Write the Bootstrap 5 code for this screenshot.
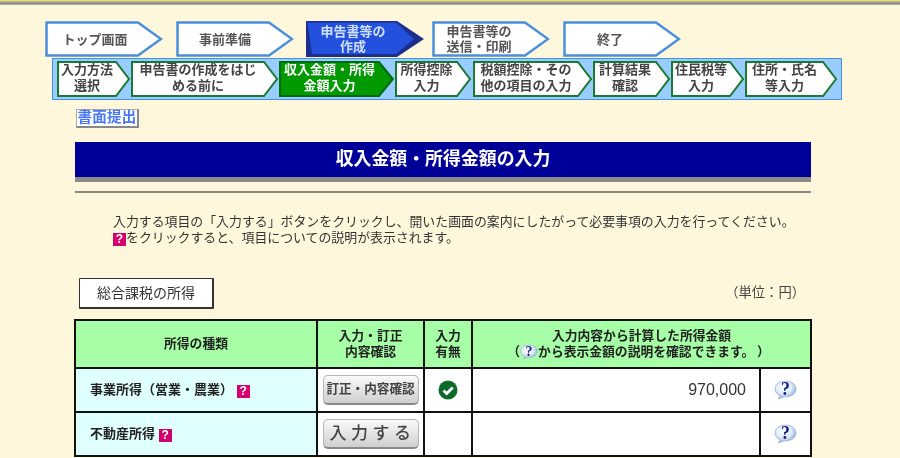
<!DOCTYPE html>
<html lang="ja">
<head>
<meta charset="utf-8">
<title>収入金額・所得金額の入力</title>
<link href="https://cdn.jsdelivr.net/npm/bootstrap@5.3.0/dist/css/bootstrap.min.css" rel="stylesheet">
<style>
html,body{height:458px;overflow:hidden}
html{background:#fff7dc}
body{background:#fff7dc;color:#222;font-family:"Liberation Sans","Noto Sans CJK JP",sans-serif;font-size:12.8px;filter:blur(.3px)}
.top-strip{height:5px;background:linear-gradient(#e6dc78 0,#e6dc78 1px,#9a9a94 2px,#8f8f8f 4px,#c9c6b4 5px)}
.flow{margin:16px 0 0 45px}
.stp{height:36px;line-height:15px;font-weight:700;color:#555;flex:none;padding-right:24px;font-size:13px}
.stp svg,.sub svg{position:absolute;left:0;top:0}
.stp span,.sub span{position:relative}
.stp-1{width:118px;margin-right:13px;padding-right:18px}
.stp-2{width:118px;margin-right:12px;padding-right:20px}
.stp-3{width:118px;margin-right:8px;color:#cfe0ff}
.stp-4{width:118px;margin-right:13px}
.stp-5{width:118px}
.subbar{margin:1px 0 0 52px;width:790px;height:42px;background:#99ccff;border:1px solid #4a90e2;padding:2px 0 0 4px}
.sub{height:36px;flex:none;font-weight:700;font-size:13px;line-height:15.5px;color:#444;padding:0 14px 3px 0}
.sub-a{width:74px}.sub-b{width:148px}.sub-c{width:115px;color:#fff;margin-right:1px}.sub-d{width:77px;margin-right:1px}
.sub-e{width:120px}.sub-f{width:78px}.sub-g{width:74px}.sub-h{width:93px}
.submit{margin:9px 0 0 76px;width:63px;height:19px;background:#fff;border:1px solid #aaa;border-right:2px solid #888;border-bottom:2px solid #888;color:#4a78f5;font-size:14.500px;font-weight:700;line-height:15px;letter-spacing:.2px}
.main{margin:14px 0 0 75px;width:736px}
.band{background:#000099;color:#fff;height:35px;font-size:17.900px;font-weight:700;line-height:35px}
.band-shadow{height:5px;background:#8a8a8a}
.rule{height:2px;background:#8a8a80;margin-top:9px}
.lead-text{margin:21px 0 0 38px;line-height:16px;color:#333;white-space:nowrap;font-size:12.900px}
.pink-q{display:inline-block;width:13px;height:13px;background:#d4006e;color:#fff;font:700 12px/13px "Liberation Sans",sans-serif;text-align:center;vertical-align:-1px}
.sec-row{margin-top:32px;padding:0 6px 0 4px}
.sec-box{width:135px;height:31px;background:#fff;border:1px solid #333;border-right-width:2px;border-bottom-width:2px;font-size:14px;line-height:29px;color:#333;border-radius:1px}
.unit{font-size:13.300px;color:#444;margin-top:5px}
.tax-table{--bs-table-bg:transparent;width:736px;margin:10px 0 0 -1px;table-layout:fixed;border-collapse:collapse;color:#222}
.tax-table th,.tax-table td{border:2px solid #111;padding:0;vertical-align:middle;box-shadow:none;font-size:12.800px}
.tax-table th{background:#a6ffa6;font-weight:700;text-align:center;line-height:16px;height:48px}
.tax-table td{background:#fff;height:44px}
.tax-table td.kind{background:#e0ffff;font-weight:700;padding-left:14px;font-size:13px}
.c1{width:242px}.c2{width:107px}.c3{width:48px}.c4{width:288px}.c5{width:51px}
.tax-table td.amount{font-size:16px;text-align:right;padding-right:13px;color:#333}
.hd2{display:inline-block;margin-right:6px}
.inbtn{--bs-btn-padding-y:0;--bs-btn-padding-x:0;display:block;margin:0 auto;width:96px;height:30px;border:1px solid #b5b5b5;border-bottom:2px solid #8a8a8a;border-radius:5px;background:linear-gradient(#fafafa,#e2e2e2 55%,#cfcfcf);color:#444;font-weight:700;line-height:27px;white-space:nowrap}
.inbtn-fix{font-size:12.600px}
.inbtn-new{font-size:17px;letter-spacing:4.500px;font-weight:500;padding-left:4px}
.hlp{vertical-align:-4px}
</style>
</head>
<body>
<svg width="0" height="0" class="position-absolute" aria-hidden="true">
<defs>
<radialGradient id="bub" cx="42%" cy="35%" r="68%"><stop offset="0" stop-color="#ffffff"/><stop offset=".55" stop-color="#dfeafa"/><stop offset="1" stop-color="#7ba2d2"/></radialGradient>
<symbol id="bubble" viewBox="0 0 22 19">
<path d="M11 1C5 1 1 4.300 1 8.500c0 3 2 5.400 5 6.600L4 18l6-2c.4 0 .7 0 1 0 6 0 10-3.200 10-7.500S17 1 11 1z" fill="url(#bub)" stroke="#9fb6d4" stroke-width=".8"/>
<text x="11" y="14" text-anchor="middle" font-family="Liberation Serif,serif" font-weight="700" font-size="17" fill="#10207f">?</text>
</symbol>
</defs>
</svg>

<div class="top-strip"></div>

<nav class="flow d-flex">
<div class="stp stp-1 position-relative d-flex align-items-center justify-content-center text-center"><svg width="118" height="36"><path d="M1.500 1.500H93L116 18 93 34.500H1.500z" fill="#fff" stroke="#4a8fdc" stroke-width="2.500"/></svg><span>トップ画面</span></div>
<div class="stp stp-2 position-relative d-flex align-items-center justify-content-center text-center"><svg width="118" height="36"><path d="M1.500 1.500H93L116 18 93 34.500H1.500z" fill="#fff" stroke="#4a8fdc" stroke-width="2.500"/></svg><span>事前準備</span></div>
<div class="stp stp-3 position-relative d-flex align-items-center justify-content-center text-center"><svg width="118" height="36"><path d="M0 0H91L118 18 91 36H0z" fill="#1c2f8c"/><path d="M1.500 1.500H90L108 18 90 33H6z" fill="#2350dc"/></svg><span>申告書等の<br>作成</span></div>
<div class="stp stp-4 position-relative d-flex align-items-center justify-content-center text-center"><svg width="118" height="36"><path d="M1.500 1.500H93L116 18 93 34.500H1.500z" fill="#fff" stroke="#4a8fdc" stroke-width="2.500"/></svg><span>申告書等の<br>送信・印刷</span></div>
<div class="stp stp-5 position-relative d-flex align-items-center justify-content-center text-center"><svg width="118" height="36"><path d="M1.500 1.500H93L116 18 93 34.500H1.500z" fill="#fff" stroke="#4a8fdc" stroke-width="2.500"/></svg><span>終了</span></div>
</nav>

<div class="subbar d-flex">
<div class="sub sub-a position-relative d-flex align-items-center justify-content-center text-center"><svg width="74" height="36"><path d="M1 1H59L72 18 59 35H1z" fill="#fff" stroke="#1a7a32" stroke-width="2"/></svg><span>入力方法<br>選択</span></div>
<div class="sub sub-b position-relative d-flex align-items-center justify-content-center text-center"><svg width="148" height="36"><path d="M1 1H133L146 18 133 35H1z" fill="#fff" stroke="#1a7a32" stroke-width="2"/></svg><span>申告書の作成をはじ<br>める前に</span></div>
<div class="sub sub-c position-relative d-flex align-items-center justify-content-center text-center"><svg width="115" height="36"><path d="M1 1H100L114 18 100 35H1z" fill="#009900" stroke="#006a10" stroke-width="2"/></svg><span>収入金額・所得<br>金額入力</span></div>
<div class="sub sub-d position-relative d-flex align-items-center justify-content-center text-center"><svg width="77" height="36"><path d="M1 1H62L75 18 62 35H1z" fill="#fff" stroke="#1a7a32" stroke-width="2"/></svg><span>所得控除<br>入力</span></div>
<div class="sub sub-e position-relative d-flex align-items-center justify-content-center text-center"><svg width="120" height="36"><path d="M1 1H105L118 18 105 35H1z" fill="#fff" stroke="#1a7a32" stroke-width="2"/></svg><span>税額控除・その<br>他の項目の入力</span></div>
<div class="sub sub-f position-relative d-flex align-items-center justify-content-center text-center"><svg width="78" height="36"><path d="M1 1H63L76 18 63 35H1z" fill="#fff" stroke="#1a7a32" stroke-width="2"/></svg><span>計算結果<br>確認</span></div>
<div class="sub sub-g position-relative d-flex align-items-center justify-content-center text-center"><svg width="74" height="36"><path d="M1 1H59L72 18 59 35H1z" fill="#fff" stroke="#1a7a32" stroke-width="2"/></svg><span>住民税等<br>入力</span></div>
<div class="sub sub-h position-relative d-flex align-items-center justify-content-center text-center"><svg width="93" height="36"><path d="M1 1H78L91 18 78 35H1z" fill="#fff" stroke="#1a7a32" stroke-width="2"/></svg><span>住所・氏名<br>等入力</span></div>
</div>

<div class="submit text-center">書面提出</div>

<main class="main">
<h1 class="band text-center m-0">収入金額・所得金額の入力</h1>
<div class="band-shadow"></div>
<div class="rule"></div>
<p class="lead-text mb-0">入力する項目の「入力する」ボタンをクリックし、開いた画面の案内にしたがって必要事項の入力を行ってください。<br><span class="pink-q">?</span>をクリックすると、項目についての説明が表示されます。</p>
<div class="sec-row d-flex justify-content-between">
<div class="sec-box text-center">総合課税の所得</div>
<div class="unit">（単位：円）</div>
</div>
<table class="table tax-table mb-0">
<colgroup><col class="c1"><col class="c2"><col class="c3"><col class="c4"><col class="c5"></colgroup>
<thead><tr>
<th>所得の種類</th>
<th>入力・訂正<br>内容確認</th>
<th>入力<br>有無</th>
<th colspan="2">入力内容から計算した所得金額<br><span class="hd2">（<svg class="hlp" width="18" height="16"><use href="#bubble"/></svg>から表示金額の説明を確認できます。&thinsp;）</span></th>
</tr></thead>
<tbody>
<tr>
<td class="kind">事業所得（営業・農業） <span class="pink-q">?</span></td>
<td><button class="btn inbtn inbtn-fix" type="button">訂正・内容確認</button></td>
<td class="text-center"><svg width="20" height="20" viewBox="0 0 20 20"><circle cx="10" cy="10" r="9.500" fill="#0b6b2b"/><path d="M5.500 10.500l3.200 3 6-6" fill="none" stroke="#fff" stroke-width="2.800"/></svg></td>
<td class="amount">970,000</td>
<td class="text-center"><svg width="23" height="20"><use href="#bubble"/></svg></td>
</tr>
<tr>
<td class="kind">不動産所得 <span class="pink-q">?</span></td>
<td><button class="btn inbtn inbtn-new" type="button">入力する</button></td>
<td></td>
<td></td>
<td class="text-center"><svg width="23" height="20"><use href="#bubble"/></svg></td>
</tr>
</tbody>
</table>
</main>
</body>
</html>
